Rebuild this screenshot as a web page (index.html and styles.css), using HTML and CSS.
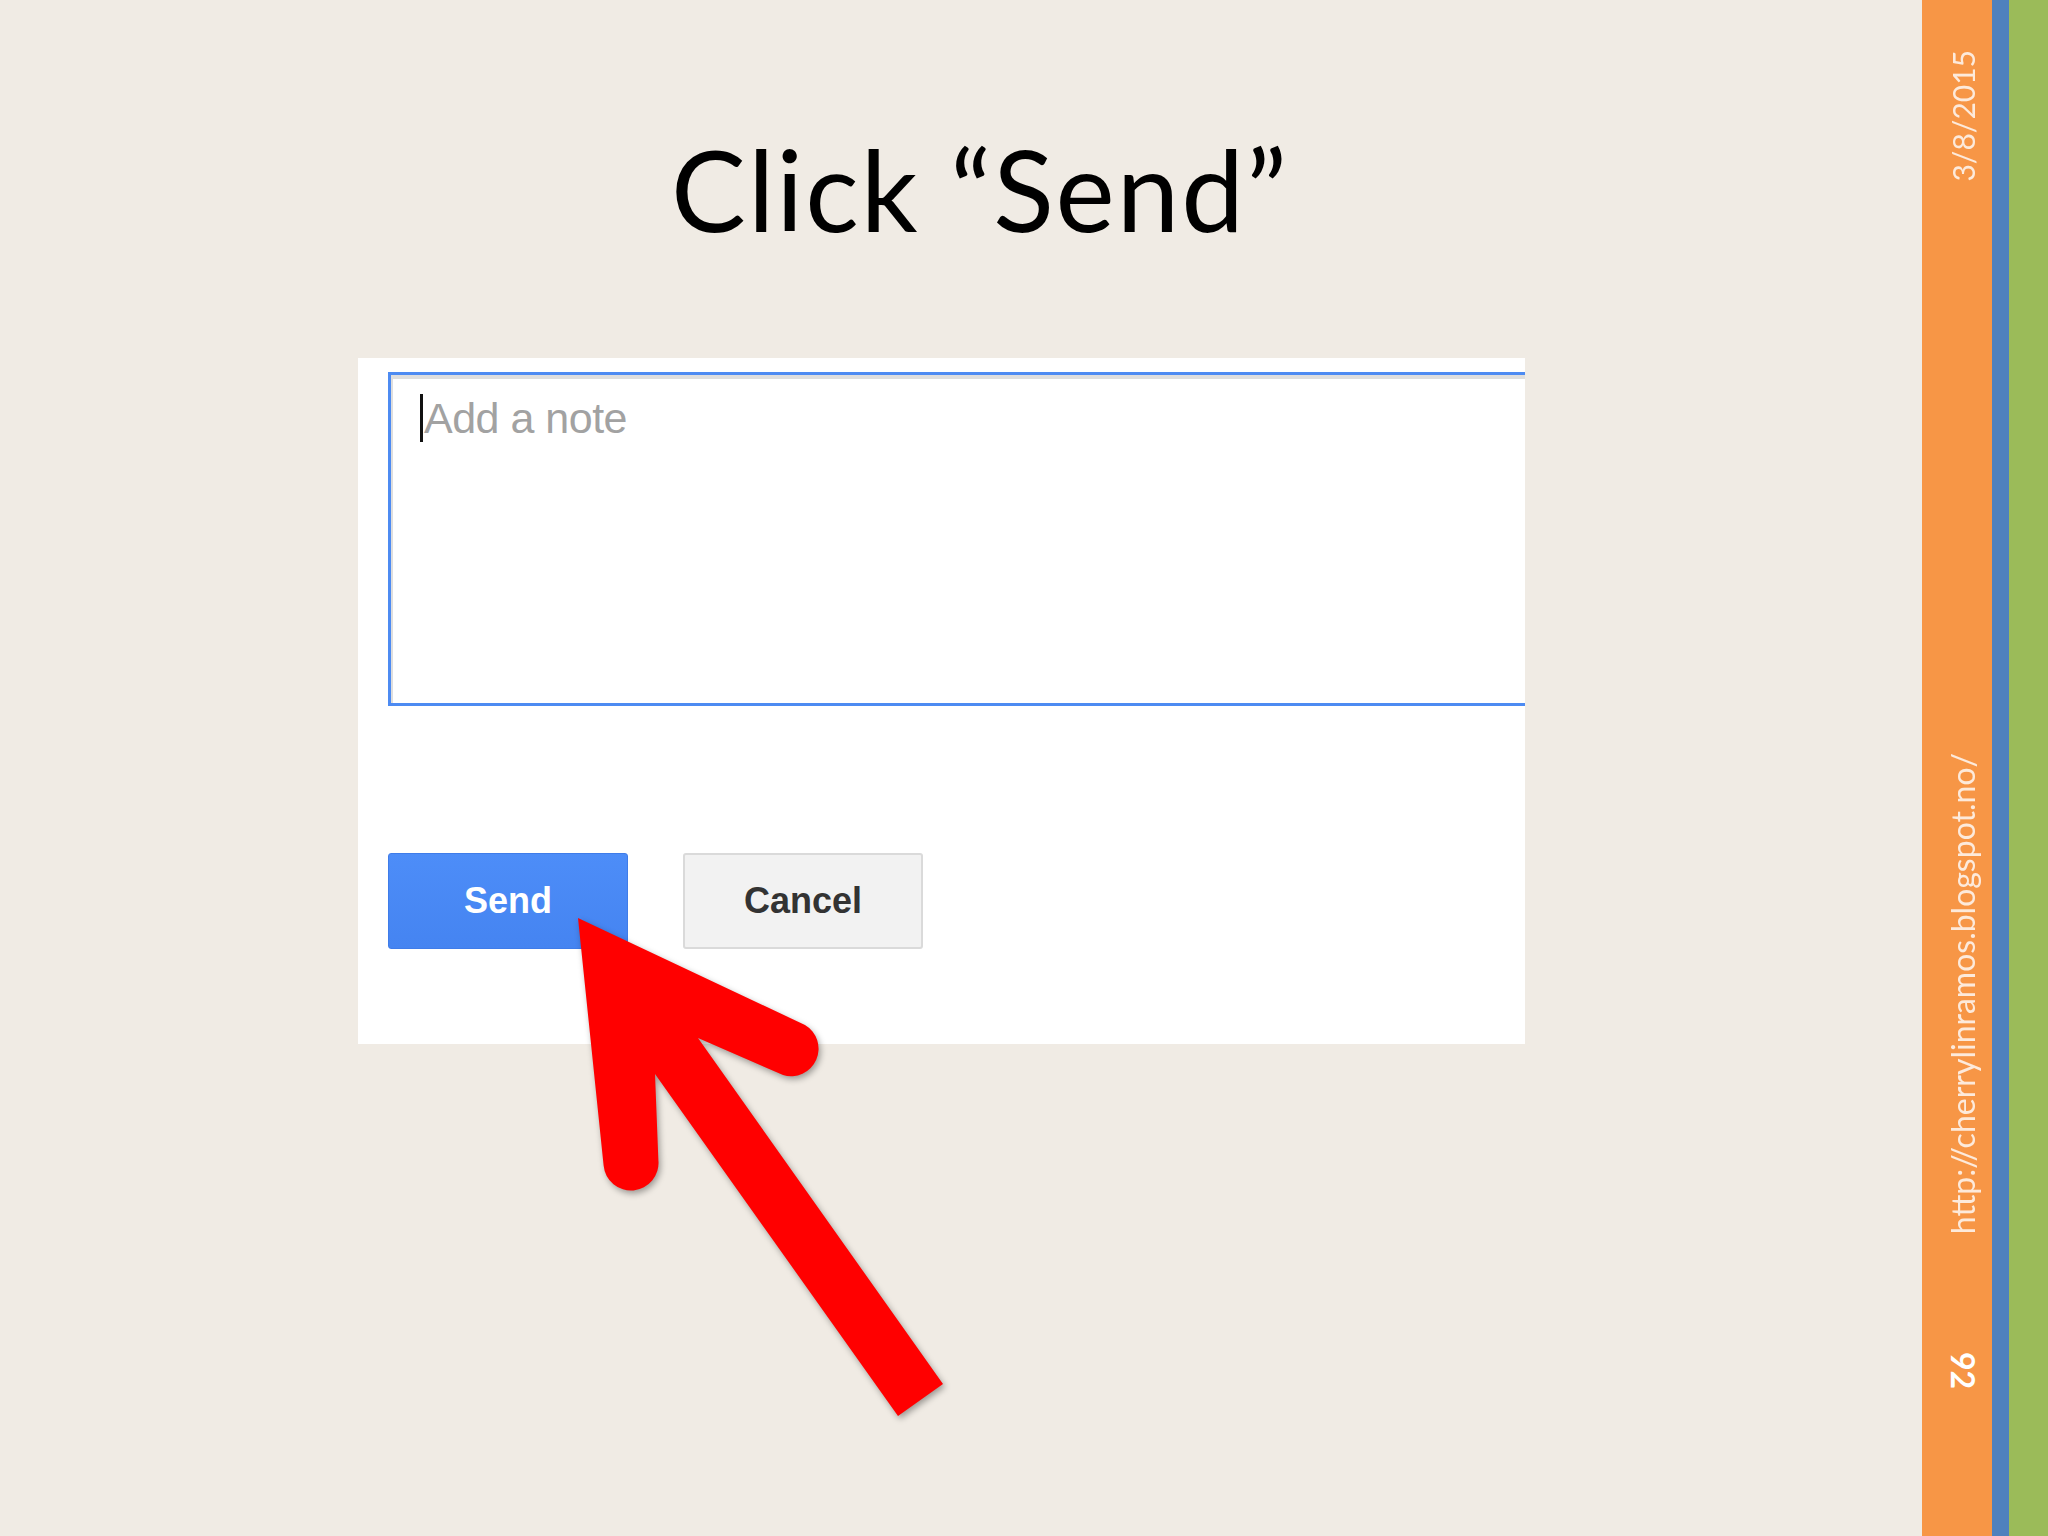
FILE: index.html
```html
<!DOCTYPE html>
<html lang="en">
<head>
  <meta charset="UTF-8">
  <title>Click "Send"</title>
  <link rel="stylesheet" href="styles.css">
</head>
<body>
  <div class="page">
    <main class="slide">
      <h1 class="title">Click “Send”</h1>
      <div class="shot">
        <div class="note-box">
          <span class="caret"></span><span class="placeholder">Add a note</span>
        </div>
        <div class="actions">
          <button class="btn btn-send">Send</button>
          <button class="btn btn-cancel">Cancel</button>
        </div>
      </div>
    </main>
    <aside class="band band-orange">
      <span class="footer-text date">3/8/2015</span>
      <span class="footer-text url">http://cherrylinramos.blogspot.no/</span>
      <span class="footer-text num">92</span>
    </aside>
    <div class="band band-blue"></div>
    <div class="band band-green"></div>
    <svg class="arrow" viewBox="0 0 2048 1536" width="2048" height="1536">
      <path d="M578 918 L805 1025 A27.5 27.5 0 0 1 783 1075 L698 1038 L943 1384 L898 1416 L655 1074 L658.4 1160.4 A27.5 27.5 0 0 1 603.6 1165.6 Z" fill="#ff0000"/>
    </svg>
  </div>
</body>
</html>
```

FILE: styles.css
```css
* { box-sizing: border-box; margin: 0; padding: 0; }
body {
  background: #f0ebe4;
  font-family: 'Lato', 'Open Sans', sans-serif;
}
.page {
  display: flex;
  width: 2048px;
  height: 1536px;
  position: relative;
  overflow: hidden;
}
.slide {
  flex: 1;
  display: flex;
  flex-direction: column;
}
.title {
  font-family: 'Lato', sans-serif;
  font-weight: 400;
  font-size: 112px;
  line-height: 1;
  color: #000;
  text-align: center;
  padding-left: 38px;
  margin-top: 133px;
  letter-spacing: 2px;
}
.shot {
  margin: 113px 0 0 358px;
  width: 1167px;
  height: 686px;
  background: #fff;
  padding: 14px 0 0 30px;
}
.note-box {
  height: 334px;
  border: 3px solid #4d8bf2;
  border-right: none;
  box-shadow: inset 2px 4px 0 #dedede;
  background: #fff;
  padding: 19px 0 0 29px;
  display: flex;
  align-items: flex-start;
  font-family: 'Liberation Sans', Arial, sans-serif;
}
.caret {
  width: 3px;
  height: 48px;
  background: #111;
}
.placeholder {
  font-size: 43px;
  line-height: 48px;
  color: #a2a2a2;
  margin-left: 1px;
  letter-spacing: -0.5px;
}
.actions {
  display: flex;
  gap: 55px;
  margin-top: 147px;
}
.btn {
  width: 240px;
  height: 96px;
  font-family: 'Liberation Sans', Arial, sans-serif;
  font-weight: bold;
  font-size: 36px;
  border-radius: 3px;
}
.btn-send {
  background: linear-gradient(#4d8df8, #4584f1);
  border: 1px solid #3f7ce9;
  color: #fff;
}
.btn-cancel {
  background: #f2f2f2;
  border: 2px solid #dadada;
  color: #333;
}
.band { height: 100%; }
.band-orange {
  width: 70px;
  background: #f79646;
  display: flex;
  flex-direction: column;
  align-items: center;
  padding-left: 12px;
}
.band-blue { width: 17px; background: #4f81bd; }
.band-green { width: 39px; background: #9bbb59; }
.footer-text {
  writing-mode: vertical-rl;
  text-orientation: sideways;
  transform: rotate(180deg);
  color: #fdeadb;
  font-family: 'Lato', 'Open Sans', sans-serif;
  font-size: 32px;
  line-height: 1;
  white-space: nowrap;
}
.date { margin-top: 50px; font-size: 30px; }
.url { margin-top: 571px; }
.num {
  margin-top: 118px;
  font-weight: bold;
  color: #fff;
  transform: none;
}
.arrow {
  position: absolute;
  left: 0;
  top: 0;
  pointer-events: none;
  filter: drop-shadow(2px 3px 3px rgba(0, 0, 0, 0.35));
}
```
